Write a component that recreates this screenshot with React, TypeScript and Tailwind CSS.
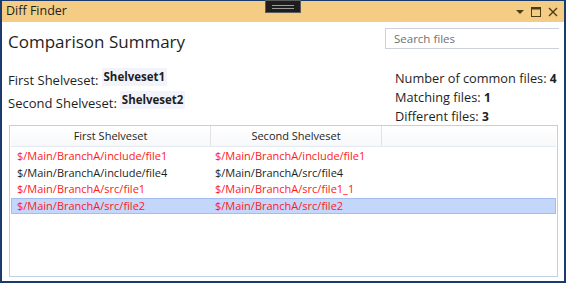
import React from "react";

const rows = [
  { a: "$/Main/BranchA/include/file1", b: "$/Main/BranchA/include/file1", diff: true },
  { a: "$/Main/BranchA/include/file4", b: "$/Main/BranchA/src/file4", diff: false },
  { a: "$/Main/BranchA/src/file1", b: "$/Main/BranchA/src/file1_1", diff: true },
  { a: "$/Main/BranchA/src/file2", b: "$/Main/BranchA/src/file2", diff: true, selected: true },
];

function TitleBar() {
  return (
    <div className="relative h-[22px] bg-[#f5cc84] flex items-center pl-[4px] pr-[5px] border-t border-[#1b3a6e]">
      <span className="text-[12.5px] text-[#1e1e1e]">Diff Finder</span>
      {/* drag handle */}
      <div className="absolute left-[263px] -top-px w-[36px] h-[13px] bg-[#1e1e1e] border border-[#5a5a5a] flex flex-col items-center justify-center gap-[2px]">
        <div className="w-[22px] h-px bg-[#9a9a9a]" />
        <div className="w-[22px] h-px bg-[#9a9a9a]" />
      </div>
      <div className="ml-auto flex items-center gap-[5px]">
        <svg width="10" height="10" viewBox="0 0 10 10">
          <path d="M1 3h8L5 7z" fill="#4a3c14" />
        </svg>
        <svg width="12" height="12" viewBox="0 0 12 12">
          <rect x="1.5" y="1.5" width="9" height="9" fill="none" stroke="#4a3c14" />
          <rect x="1.5" y="1.5" width="9" height="2" fill="#4a3c14" />
        </svg>
        <svg width="12" height="12" viewBox="0 0 12 12">
          <path d="M2 2l8 8M10 2l-8 8" stroke="#4a3c14" strokeWidth="1.4" />
        </svg>
      </div>
    </div>
  );
}

export default function App() {
  return (
    <div
      className="w-[566px] h-[283px] bg-[#1b3a6e] px-[2px] pb-[2px] flex flex-col text-[#1e1e1e]"
      style={{ fontFamily: '"Open Sans", "Noto Sans", sans-serif' }}
    >
      <TitleBar />
      <div className="flex-1 bg-white flex flex-col pl-[6px] pr-[5px] pb-[4px]">
        <div className="flex items-start justify-between pt-[7px] h-[40px]">
          <h1 className="text-[17px] leading-[26px] text-[#1e1e1e]">Comparison Summary</h1>
          <div className="mt-[-1px] w-[174px] h-[21px] border border-r-0 border-[#ccd0dc] flex items-center pl-[8px] text-[11.5px] text-[#707070]">
            Search files
          </div>
        </div>
        <div className="flex justify-between h-[63px]">
          <div className="flex flex-col pt-[5px] text-[13px] leading-[20px]">
            <div className="flex items-start">
              <span className="mt-[3px]">First Shelveset:</span>
              <span className="ml-[3px] mt-[1px] px-[2px] bg-[#f3f3fb] font-bold text-[11.5px] leading-[18px]">Shelveset1</span>
            </div>
            <div className="flex items-start">
              <span className="mt-[3px]">Second Shelveset:</span>
              <span className="ml-[3px] mt-[1px] px-[2px] bg-[#f3f3fb] font-bold text-[11.5px] leading-[18px]">Shelveset2</span>
            </div>
          </div>
          <div className="flex flex-col pt-[7px] text-[12.75px] leading-[18px] w-[164px] whitespace-nowrap">
            <div>
              Number of common files: <span className="font-bold text-[12px]">4</span>
            </div>
            <div>
              Matching files: <span className="font-bold text-[12px]">1</span>
            </div>
            <div>
              Different files: <span className="font-bold text-[12px]">3</span>
            </div>
          </div>
        </div>
        <div className="flex-1 border border-[#bcd2e6] mr-[1px] ml-px flex flex-col px-px">
          <div className="flex h-[21px] text-[11px] border-b border-[#e5e9f0] bg-gradient-to-b from-white to-[#f7f8fa]">
            <div className="w-[200px] border-r border-[#e2e2e2] flex items-center justify-center">First Shelveset</div>
            <div className="w-[171px] border-r border-[#e2e2e2] flex items-center justify-center">Second Shelveset</div>
            <div className="flex-1" />
          </div>
          <div className="pt-[1px] flex flex-col">
            {rows.map((r, i) => (
              <div
                key={i}
                className={`flex h-[16.5px] items-center text-[11px] border ${
                  r.selected ? "bg-[#c4d6fa] border-[#a3bdf0]" : "border-transparent"
                } ${r.diff ? "text-[#ff1a1a]" : "text-[#1e1e1e]"}`}
              >
                <div className="w-[200px] pl-[5px] whitespace-nowrap">{r.a}</div>
                <div className="w-[171px] pl-[3px] whitespace-nowrap">{r.b}</div>
              </div>
            ))}
          </div>
        </div>
      </div>
    </div>
  );
}
